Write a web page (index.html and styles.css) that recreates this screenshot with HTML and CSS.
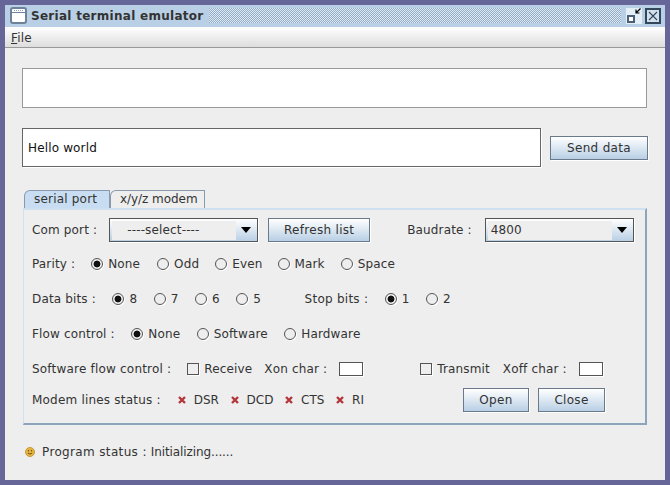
FILE: index.html
```html
<!DOCTYPE html>
<html lang="en">
<head>
  <meta charset="UTF-8">
  <meta name="viewport" content="width=device-width, initial-scale=1.0">
  <title>Serial terminal emulator</title>
  <link rel="stylesheet" href="styles.css">
</head>
<body>

  <div class="window">
    <header class="titlebar">
      <svg class="app-icon" width="17" height="17" viewBox="0 0 17 17">
        <rect x="1" y="1" width="15" height="15" rx="2" fill="#fff" stroke="#6d8299" stroke-width="2"/>
        <path d="M2 5.5h13" stroke="#6d8299"/>
        <path d="M4 3.5h9" stroke="#8aa0b8" stroke-dasharray="1 1"/>
      </svg>
      <h1>Serial terminal emulator</h1>
      <div class="bumps"></div>
      <svg class="win-btn" width="16" height="16" viewBox="0 0 16 16">
        <rect x="0" y="0" width="16" height="16" fill="#e4eef7"/>
        <rect x="2" y="8" width="6" height="6" fill="#fff" stroke="#4a6078" stroke-width="2"/>
        <path d="M14.5 0.5L10 5M10 1.5v3.5h3.5" fill="none" stroke="#000" stroke-width="1.2"/>
      </svg>
      <svg class="win-btn close" width="16" height="16" viewBox="0 0 16 16">
        <rect x="1" y="1" width="14" height="14" fill="#d3e1ef" stroke="#33475c" stroke-width="2"/>
        <path d="M4 4l8 8M12 4l-8 8" stroke="#33475c" stroke-width="1.1"/>
      </svg>
    </header>

    <nav class="menubar"><span><u>F</u>ile</span></nav>

    <main class="content">
      <div class="field field-off"></div>

      <div class="send-row">
        <div class="field field-send">Hello world</div>
        <button class="btn btn-send" type="button">Send data</button>
      </div>

      <div class="tabs">
        <div class="tab tab-on">serial port</div>
        <div class="tab">x/y/z modem</div>
      </div>

      <section class="panel">
        <div class="row row-first">
          <span>Com port :</span>
          <div class="combo combo-port"><span class="combo-text">----select----</span><i class="arrow"></i></div>
          <button class="btn btn-refresh" type="button">Refresh list</button>
          <span class="baud-label">Baudrate :</span>
          <div class="combo combo-baud"><span class="combo-text">4800</span><i class="arrow"></i></div>
        </div>

        <div class="row row-parity">
          <span>Parity :</span>
          <label class="opt"><input type="radio" name="parity" checked>None</label>
          <label class="opt opt-odd"><input type="radio" name="parity">Odd</label>
          <label class="opt"><input type="radio" name="parity">Even</label>
          <label class="opt opt-mark"><input type="radio" name="parity">Mark</label>
          <label class="opt"><input type="radio" name="parity">Space</label>
        </div>

        <div class="row row-bits">
          <span>Data bits :</span>
          <label class="opt"><input type="radio" name="data" checked>8</label>
          <label class="opt"><input type="radio" name="data">7</label>
          <label class="opt"><input type="radio" name="data">6</label>
          <label class="opt"><input type="radio" name="data">5</label>
          <span class="stop-label">Stop bits :</span>
          <label class="opt"><input type="radio" name="stop" checked>1</label>
          <label class="opt"><input type="radio" name="stop">2</label>
        </div>

        <div class="row row-flow">
          <span>Flow control :</span>
          <label class="opt"><input type="radio" name="flow" checked>None</label>
          <label class="opt"><input type="radio" name="flow">Software</label>
          <label class="opt"><input type="radio" name="flow">Hardware</label>
        </div>

        <div class="row row-soft">
          <span class="soft-label">Software flow control :</span>
          <label class="opt"><input type="checkbox">Receive</label>
          <span class="xon">Xon char :</span>
          <div class="char-box"></div>
          <label class="opt transmit"><input type="checkbox">Transmit</label>
          <span class="xoff">Xoff char :</span>
          <div class="char-box"></div>
        </div>

        <div class="row row-modem">
          <span class="modem-label">Modem lines status :</span>
          <span class="line"><svg width="8" height="8" viewBox="0 0 8 8"><path d="M1 1l6 6M7 1l-6 6" stroke="#b3363c" stroke-width="2.4"/></svg>DSR</span>
          <span class="line"><svg width="8" height="8" viewBox="0 0 8 8"><path d="M1 1l6 6M7 1l-6 6" stroke="#b3363c" stroke-width="2.4"/></svg>DCD</span>
          <span class="line"><svg width="8" height="8" viewBox="0 0 8 8"><path d="M1 1l6 6M7 1l-6 6" stroke="#b3363c" stroke-width="2.4"/></svg>CTS</span>
          <span class="line"><svg width="8" height="8" viewBox="0 0 8 8"><path d="M1 1l6 6M7 1l-6 6" stroke="#b3363c" stroke-width="2.4"/></svg>RI</span>
          <button class="btn btn-open" type="button">Open</button>
          <button class="btn btn-close" type="button">Close</button>
        </div>
      </section>

      <div class="status">
        <svg width="10" height="10" viewBox="0 0 10 10">
          <circle cx="5" cy="5" r="4.5" fill="#e6b540" stroke="#c49a3a"/>
          <circle cx="3.5" cy="3.8" r="0.7" fill="#6b4a10"/>
          <circle cx="6.5" cy="3.8" r="0.7" fill="#6b4a10"/>
          <path d="M2.8 6.2q2.2 1.6 4.4 0" fill="none" stroke="#6b4a10" stroke-width="0.9"/>
        </svg>
        <span class="status-label">Program status :</span>
        <span class="status-text">Initializing......</span>
      </div>
    </main>
  </div>

</body>
</html>
```

FILE: styles.css
```css
html, body {
  margin: 0;
  padding: 0;
}

body {
  width: 670px;
  height: 485px;
  box-sizing: border-box;
  padding: 5px;
  background-color: #666699;
  font-family: "DejaVu Sans", sans-serif;
  font-size: 12px;
  letter-spacing: 0.15px;
  color: #333;
  overflow: hidden;
}

.window {
  height: 475px;
  background-color: #eeeeee;
}

.titlebar {
  display: flex;
  align-items: center;
  height: 22px;
  padding: 0 4px 1px 5px;
  box-sizing: border-box;
  background-color: #b8cfe5;
}

.titlebar h1 {
  margin: 0 0 0 4px;
  font-size: 12px;
  font-weight: bold;
  color: #333;
  letter-spacing: 0.28px;
  white-space: nowrap;
}

.bumps {
  flex: 1;
  height: 15px;
  margin: 0 5px 0 5px;
  background-color: #b8cfe5;
  background-image: repeating-conic-gradient(#dfe9f3 0 25%, #94adc6 0 50%);
  background-size: 2px 2px;
}

.win-btn {
  flex: none;
}

.close {
  margin-left: 3px;
}

.menubar {
  display: flex;
  align-items: center;
  box-sizing: border-box;
  height: 21px;
  padding: 1px 6px 0;
  background: linear-gradient(#ffffff, #dddddd);
  border-bottom: 1px solid #999;
  color: #333;
}

.content {
  padding: 20px 17px 0;
}

.field {
  box-sizing: border-box;
  background-color: #fff;
  border: 1px solid #999;
}

.field-off {
  width: 625px;
  height: 40px;
}

.send-row {
  display: flex;
  align-items: center;
  margin-top: 20px;
}

.field-send {
  display: flex;
  align-items: center;
  width: 519px;
  height: 39px;
  padding-left: 5px;
  border-color: #666;
  color: #111;
  box-shadow: 1px 1px 0 #fff;
}

.btn {
  box-sizing: border-box;
  height: 24px;
  padding: 0;
  font-family: inherit;
  font-size: 12px;
  color: #333;
  letter-spacing: 0.3px;
  background: linear-gradient(#ffffff, #b8cfe5);
  border: 1px solid #6a7a8a;
  box-shadow: 1px 1px 0 #fff;
}

.btn-send {
  width: 98px;
  margin-left: 9px;
}

.tabs {
  display: flex;
  margin: 23px 0 0 2px;
  height: 18px;
}

.tab {
  box-sizing: border-box;
  height: 18px;
  width: 95px;
  padding-left: 9px;
  line-height: 17px;
  letter-spacing: -0.05px;
  border: 1px solid #8a9aac;
  border-bottom: 0;
  border-top-left-radius: 6px;
  color: #333;
}

.tab-on {
  width: 86px;
  letter-spacing: 0.2px;
  background-color: #c8ddf2;
}

.panel {
  box-sizing: border-box;
  width: 624px;
  height: 217px;
  margin-left: 1px;
  padding: 8px 0 0 8px;
  border: 2px solid #cfe0f1;
  border-left-width: 1px;
  border-right-color: #8da4bd;
  border-bottom-color: #8da4bd;
}

.row {
  display: flex;
  align-items: center;
  height: 24px;
  margin-top: 11px;
  white-space: nowrap;
}

.row-first {
  margin-top: 0;
}

.row-parity {
  margin-top: 10px;
}

.row-modem {
  margin-top: 7px;
}

.combo {
  display: flex;
  align-items: center;
  box-sizing: border-box;
  width: 149px;
  height: 24px;
  background: linear-gradient(#ffffff, #b8cfe5);
  border: 1px solid #555;
  box-shadow: 1px 1px 0 #fff;
}

.combo-text {
  flex: 1;
  height: 19px;
  line-height: 19px;
  margin-left: 2px;
  background-color: #eeeeee;
}

.combo-port {
  margin-left: 12px;
}

.combo-port .combo-text {
  padding-left: 15px;
}

.combo-baud .combo-text {
  padding-left: 3px;
}

.arrow {
  width: 0;
  height: 0;
  margin: 0 6px 0 5px;
  border-left: 5px solid transparent;
  border-right: 5px solid transparent;
  border-top: 6px solid #000;
}

.btn-refresh {
  width: 102px;
  margin-left: 10px;
}

.baud-label {
  margin-left: 37px;
}

.combo-baud {
  margin-left: 13px;
}

.opt {
  display: flex;
  align-items: center;
  margin-left: 16px;
}

.row-bits .opt,
.row-flow .opt {
  margin-left: 16.5px;
}

.row-parity .opt-odd {
  margin-left: 17px;
}

.row-parity .opt-mark {
  margin-left: 15px;
}

.opt input {
  appearance: none;
  flex: none;
  box-sizing: border-box;
  width: 12px;
  height: 12px;
  margin: 0 5px 0 0;
  background-color: #eee;
  border: 1px solid #555;
  box-shadow: 1px 1px 0 #fff;
}

.opt input[type="radio"] {
  border-radius: 50%;
}

.opt input[type="radio"]:checked {
  background-image: radial-gradient(circle, #111 3px, transparent 3.8px);
}

.stop-label {
  margin-left: 43.5px;
  letter-spacing: 0.25px;
}

.soft-label {
  letter-spacing: 0.2px;
}

.xon {
  margin-left: 12px;
}

.char-box {
  box-sizing: border-box;
  width: 24px;
  height: 14px;
  margin-left: 12px;
  background-color: #fff;
  border: 1px solid #555;
  box-shadow: 1px 1px 0 #fff;
}

.transmit {
  margin-left: 57px;
}

.xoff {
  margin-left: 13px;
}

.modem-label {
  letter-spacing: 0.2px;
}

.line {
  display: flex;
  align-items: center;
  gap: 8px;
  margin-left: 11.5px;
  letter-spacing: 0.05px;
}

.modem-label + .line {
  margin-left: 17px;
}

.btn-open {
  width: 66px;
  margin-left: auto;
}

.btn-close {
  width: 67px;
  margin: 0 40px 0 9px;
}

.status {
  display: flex;
  align-items: center;
  margin: 17px 0 0 3px;
  height: 20px;
}

.status-label {
  margin-left: 7px;
  letter-spacing: 0.35px;
}

.status-text {
  margin-left: 4px;
  letter-spacing: -0.1px;
}
```
